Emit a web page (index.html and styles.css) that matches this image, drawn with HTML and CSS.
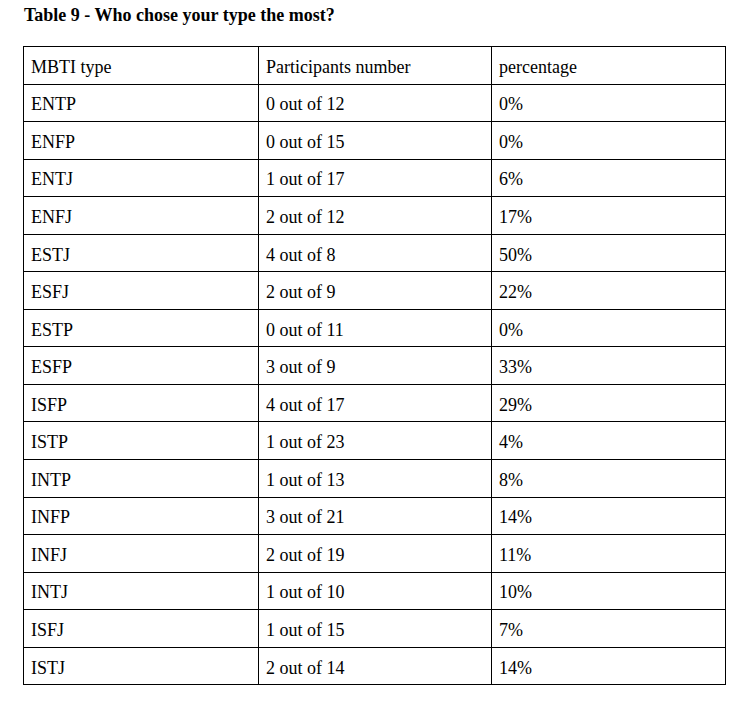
FILE: index.html
```html
<!DOCTYPE html>
<html>
<head>
<meta charset="utf-8">
<link rel="stylesheet" href="styles.css">
</head>
<body>
<div class="page">
  <h1 class="title">Table 9 - Who chose your type the most?</h1>
  <table class="data">
    <colgroup><col class="c1"><col class="c2"><col class="c3"></colgroup>
    <tr><td>MBTI type</td><td>Participants number</td><td>percentage</td></tr>
    <tr><td>ENTP</td><td>0 out of 12</td><td>0%</td></tr>
    <tr><td>ENFP</td><td>0 out of 15</td><td>0%</td></tr>
    <tr><td>ENTJ</td><td>1 out of 17</td><td>6%</td></tr>
    <tr><td>ENFJ</td><td>2 out of 12</td><td>17%</td></tr>
    <tr><td>ESTJ</td><td>4 out of 8</td><td>50%</td></tr>
    <tr><td>ESFJ</td><td>2 out of 9</td><td>22%</td></tr>
    <tr><td>ESTP</td><td>0 out of 11</td><td>0%</td></tr>
    <tr><td>ESFP</td><td>3 out of 9</td><td>33%</td></tr>
    <tr><td>ISFP</td><td>4 out of 17</td><td>29%</td></tr>
    <tr><td>ISTP</td><td>1 out of 23</td><td>4%</td></tr>
    <tr><td>INTP</td><td>1 out of 13</td><td>8%</td></tr>
    <tr><td>INFP</td><td>3 out of 21</td><td>14%</td></tr>
    <tr><td>INFJ</td><td>2 out of 19</td><td>11%</td></tr>
    <tr><td>INTJ</td><td>1 out of 10</td><td>10%</td></tr>
    <tr><td>ISFJ</td><td>1 out of 15</td><td>7%</td></tr>
    <tr><td>ISTJ</td><td>2 out of 14</td><td>14%</td></tr>
  </table>
</div>
</body>
</html>
```
FILE: styles.css
```css
html, body {
  margin: 0;
  padding: 0;
  background: #ffffff;
}
.page {
  padding: 4px 0 0 23px;
  font-family: "Liberation Serif", "Times New Roman", serif;
  color: #000;
}
.title {
  margin: 0 0 0 1px;
  font-size: 18px;
  font-weight: bold;
  line-height: 22px;
  height: 42px;
}
.data {
  border-collapse: collapse;
  width: 702px;
  table-layout: fixed;
  font-size: 18px;
}
.c1 { width: 235px; }
.c2 { width: 233px; }
.c3 { width: 234px; }
.data tr {
  height: 37.55px;
}
.data td {
  border: 1px solid #000;
  padding: 3px 7px 0 7px;
  vertical-align: middle;
  line-height: 20px;
}
```
